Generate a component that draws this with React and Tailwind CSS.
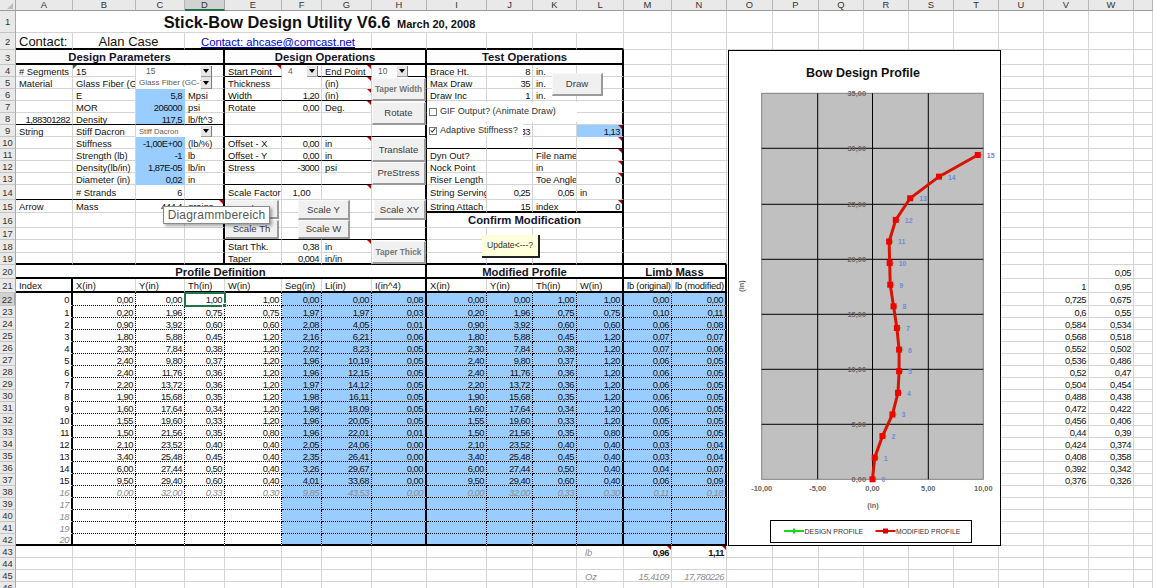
import React from 'react';

const COLS = ['A', 'B', 'C', 'D', 'E', 'F', 'G', 'H', 'I', 'J', 'K', 'L', 'M', 'N', 'O', 'P', 'Q', 'R', 'S', 'T', 'U', 'V', 'W', 'X'];
const LAST_ROW = 46;

// right aligned, centered and bold heading cells
const r = (t, extra = '') => ({ t, a: 'justify-end pr-[2px] tracking-[-0.5px]', extra });
const c = (t, extra = '', pt = 'pt-[2px]') => ({ t, a: 'justify-center', extra, pt });
const head = (t) => c(t, 'font-bold text-[11.3px] text-[#14142a]', 'pt-[3px]');
const dim = 'italic text-[#8c8c8c]';

// top of the sheet, everything above the profile tables
const cells = {
    A1: c(<span>Stick-Bow Design Utility V6.6 <span className="text-[11px] ml-[2px]">March 20, 2008</span></span>, 'font-bold text-[16.4px] text-[#111]', 'pt-[1px]'),
    A2: { t: 'Contact:', extra: 'text-[13px]', pt: 'pt-[2px]' },
    B2: c('Alan Case', 'text-[13px]', 'pt-[2px]'),
    D2: c(<a href="#contact" className="underline">Contact: ahcase@comcast.net</a>, 'text-[11.3px] text-[#0000c8]', 'pt-[5px]'),
    A3: head('Design Parameters'),
    E3: head('Design Operations'),
    I3: head('Test Operations'),
    A4: '# Segments', B4: '15', E4: 'Start Point', G4: 'End Point', I4: 'Brace Ht.', J4: r('8'), K4: 'in.',
    A5: 'Material', B5: 'Glass Fiber (GC-70)', E5: 'Thickness', G5: '(in)', I5: 'Max Draw', J5: r('35'), K5: 'in.',
    B6: 'E', C6: r('5,8'), D6: 'Mpsi', E6: 'Width', F6: r('1,20'), G6: '(in)', I6: 'Draw Inc', J6: r('1'), K6: 'in.',
    B7: 'MOR', C7: r('206000'), D7: 'psi', E7: 'Rotate', F7: r('0,00'), G7: 'Deg.',
    A8: r('1,88301282'), B8: 'Density', C8: r('117,5'), D8: 'lb/ft^3',
    A9: 'String', B9: 'Stiff Dacron', J9: r('33'), L9: r('1,13'),
    B10: 'Stiffness', C10: r('-1,00E+00'), D10: '(lb/%)', E10: 'Offset - X', F10: r('0,00'), G10: 'in',
    B11: 'Strength (lb)', C11: r('-1'), D11: 'lb', E11: 'Offset - Y', F11: r('0,00'), G11: 'in', I11: 'Dyn Out?', K11: 'File name',
    B12: 'Density(lb/in)', C12: r('1,87E-05'), D12: 'lb/in', E12: 'Stress', F12: r('-3000'), G12: 'psi', I12: 'Nock Point', K12: 'in',
    B13: 'Diameter (in)', C13: r('0,02'), D13: 'in', I13: 'Riser Length', K13: 'Toe Angle', L13: r('0'),
    B14: '# Strands', C14: r('6'), E14: 'Scale Factor', F14: c('1,00'), I14: 'String Serving', J14: r('0,25'), K14: r('0,05'), L14: 'in',
    A15: 'Arrow', B15: 'Mass', C15: r('444,4'), D15: 'grains', I15: 'String Attach', J15: r('15'), K15: 'index', L15: r('0'),
    I16: c('Confirm Modification', 'font-bold text-[11.3px] text-[#14142a]'),
    E18: 'Start Thk.', F18: r('0,38'), G18: 'in',
    E19: 'Taper', F19: r('0,004'), G19: 'in/in',
    A20: head('Profile Definition'),
    I20: head('Modified Profile'),
    M20: head('Limb Mass'),
    A21: 'Index', B21: 'X(in)', C21: 'Y(in)', D21: 'Th(in)', E21: 'W(in)', F21: 'Seg(in)', G21: 'Li(in)', H21: 'I(in^4)',
    I21: 'X(in)', J21: 'Y(in)', K21: 'Th(in)', L21: 'W(in)',
    M21: { t: 'lb (original)', extra: 'tracking-[-0.2px]' }, N21: { t: 'lb (modified)', extra: 'tracking-[-0.2px]' },
    L43: { t: 'lb', extra: dim + ' pl-[8px]' }, M43: r('0,96', 'font-bold'), N43: r('1,11', 'font-bold'),
    L45: { t: 'Oz', extra: dim + ' pl-[8px]' }, M45: r('15,4109', dim), N45: r('17,780226', dim),
    W20: r('0,05'), V21: r('1'), W21: r('0,95'),
};

// merged cells: [columns taken, class]
const spans = {
    A1: [12, 'col-span-12'], B2: [2, 'col-span-2'], D2: [4, 'col-span-4'],
    A3: [4, 'col-span-4'], E3: [4, 'col-span-4'], I3: [4, 'col-span-4'], I16: [4, 'col-span-4'],
    A20: [8, 'col-span-8'], I20: [4, 'col-span-4'], M20: [2, 'col-span-2'],
};

// x, y, th, w, seg, li, i, limb original, limb modified
const profile = [
    ['0,00', '0,00', '1,00', '1,00', '0,00', '0,00', '0,08', '0,00', '0,00'],
    ['0,20', '1,96', '0,75', '0,75', '1,97', '1,97', '0,03', '0,10', '0,11'],
    ['0,90', '3,92', '0,60', '0,60', '2,08', '4,05', '0,01', '0,06', '0,08'],
    ['1,80', '5,88', '0,45', '1,20', '2,16', '6,21', '0,06', '0,07', '0,07'],
    ['2,30', '7,84', '0,38', '1,20', '2,02', '8,23', '0,05', '0,07', '0,06'],
    ['2,40', '9,80', '0,37', '1,20', '1,96', '10,19', '0,05', '0,06', '0,05'],
    ['2,40', '11,76', '0,36', '1,20', '1,96', '12,15', '0,05', '0,06', '0,05'],
    ['2,20', '13,72', '0,36', '1,20', '1,97', '14,12', '0,05', '0,06', '0,05'],
    ['1,90', '15,68', '0,35', '1,20', '1,98', '16,11', '0,05', '0,06', '0,05'],
    ['1,60', '17,64', '0,34', '1,20', '1,98', '18,09', '0,05', '0,06', '0,05'],
    ['1,55', '19,60', '0,33', '1,20', '1,96', '20,05', '0,05', '0,05', '0,05'],
    ['1,50', '21,56', '0,35', '0,80', '1,96', '22,01', '0,01', '0,05', '0,05'],
    ['2,10', '23,52', '0,40', '0,40', '2,05', '24,06', '0,00', '0,03', '0,04'],
    ['3,40', '25,48', '0,45', '0,40', '2,35', '26,41', '0,00', '0,03', '0,04'],
    ['6,00', '27,44', '0,50', '0,40', '3,26', '29,67', '0,00', '0,04', '0,07'],
    ['9,50', '29,40', '0,60', '0,40', '4,01', '33,68', '0,00', '0,06', '0,09'],
    ['0,00', '32,00', '0,33', '0,30', '9,85', '43,53', '0,00', '0,11', '0,18'],
];

profile.forEach((p, i) => {
    const row = 22 + i;
    const extra = i === 16 ? dim : '';
    const vals = [p[0], p[1], p[2], p[3], p[4], p[5], p[6], p[0], p[1], p[2], p[3], p[7], p[8]];
    cells[`A${row}`] = r(String(i), extra);
    vals.forEach((v, k) => {
        cells[`${COLS[k + 1]}${row}`] = r(v, extra);
    });
});
[17, 18, 19, 20].forEach((n) => {
    cells[`A${n + 22}`] = r(String(n), dim);
});

// stray helper columns to the right of the chart
[
    ['0,725', '0,675'], ['0,6', '0,55'], ['0,584', '0,534'], ['0,568', '0,518'], ['0,552', '0,502'], ['0,536', '0,486'],
    ['0,52', '0,47'], ['0,504', '0,454'], ['0,488', '0,438'], ['0,472', '0,422'], ['0,456', '0,406'], ['0,44', '0,39'],
    ['0,424', '0,374'], ['0,408', '0,358'], ['0,392', '0,342'], ['0,376', '0,326'],
].forEach(([v, w], i) => {
    cells[`V${22 + i}`] = r(v);
    cells[`W${22 + i}`] = r(w);
});

const redCorners = new Set(['E4', 'G4', 'G5', 'G6', 'G7', 'G10', 'G14', 'D15', 'G18', 'L9', 'L10', 'L11', 'L12', 'L13', 'L15', 'M43', 'N43']);

const inRange = (col, from, to) => COLS.indexOf(col) >= COLS.indexOf(from) && COLS.indexOf(col) <= COLS.indexOf(to);

const isBlue = (col, row) =>
    (col === 'C' && ((row >= 6 && row <= 8) || (row >= 10 && row <= 13))) ||
    (col === 'L' && row === 9) ||
    (row >= 22 && row <= 42 && inRange(col, 'F', 'N'));

const thickRight = (col, row) =>
    (col === 'D' && row >= 3 && row <= 19) ||
    (col === 'H' && row >= 3 && row <= 42) ||
    (col === 'L' && row >= 3 && row <= 42) ||
    (col === 'N' && row >= 20 && row <= 42) ||
    (col === 'A' && row >= 21 && row <= 42);

const thickBottom = (col, row) =>
    ((row === 2 || row === 3) && inRange(col, 'A', 'L')) ||
    ([19, 20, 21, 42].includes(row) && inRange(col, 'A', 'N')) ||
    (row === 15 && inRange(col, 'I', 'L'));

const thinBottom = (col, row) =>
    ((row === 4 || row === 6 || row === 9 || row === 11 || row === 13 || row === 17) && inRange(col, 'E', 'H')) ||
    ((row === 8 || row === 14) && inRange(col, 'A', 'D')) ||
    (row === 10 && inRange(col, 'I', 'L'));

const rightBorder = (col, row, blue) => {
    if (thickRight(col, row)) return 'border-r-2 border-r-black';
    if (row >= 22 && row <= 42 && inRange(col, 'B', 'M')) return 'border-r border-r-black [border-right-style:dotted]';
    if (blue) return 'border-r border-r-[#99ccff]';
    return 'border-r border-r-[#d4d4d4]';
};

const bottomBorder = (col, row, blue) => {
    if (thickBottom(col, row)) return 'border-b-2 border-b-black';
    if (thinBottom(col, row)) return 'border-b border-b-black';
    if (row >= 22 && row <= 41) {
        if (col === 'A') return 'border-b border-b-white';
        if (inRange(col, 'B', 'N')) return 'border-b border-b-black [border-bottom-style:dotted]';
    }
    if (blue) return 'border-b border-b-[#99ccff]';
    return 'border-b border-b-[#d4d4d4]';
};

const Corner = () => (
    <span className="absolute top-0 right-0 w-0 h-0 border-t-[4px] border-l-[4px] border-t-[#c00000] border-l-transparent" />
);

const Cell = ({ col, row }) => {
    const key = `${col}${row}`;
    const raw = cells[key];
    const cell = raw && typeof raw === 'object' && raw.t !== undefined ? raw : { t: raw };
    const [span, spanClass] = spans[key] || [1, ''];
    const end = COLS[COLS.indexOf(col) + span - 1];
    const blue = isBlue(col, row);
    return (
        <div
            className={`relative flex items-center overflow-x-clip whitespace-nowrap ${spanClass} ${blue ? 'bg-[#99ccff]' : 'bg-white'} ${rightBorder(end, row, blue)} ${bottomBorder(end, row, blue)} ${cell.a || 'pl-[3px]'} ${cell.pt || 'pt-[2px]'} ${cell.extra || ''}`}
        >
            {cell.t}
            {redCorners.has(key) && <Corner />}
            {key === 'B4' && (
                <span className="absolute top-0 left-0 w-0 h-0 border-t-[4px] border-r-[4px] border-t-[#217346] border-r-transparent" />
            )}
        </div>
    );
};

// every row of the sheet, skipping cells that sit inside a merge
const SheetRow = ({ row }) => {
    const out = [];
    for (let i = 0; i < COLS.length; i++) {
        const span = spans[`${COLS[i]}${row}`];
        out.push(<Cell key={COLS[i]} col={COLS[i]} row={row} />);
        if (span) i += span[0] - 1;
    }
    return (
        <>
            <div
                className={`flex items-center justify-center pt-[1px] border-r border-b border-r-[#a8a8a8] border-b-[#c4c4c4] text-[#333] ${row === 22 ? 'bg-[#d2d2d2] text-[#1c6b3c] border-r-2 border-r-[#217346]' : 'bg-[#e9e9e9]'}`}
            >
                {row}
            </div>
            {out}
        </>
    );
};

const Button = ({ label, className, small }) => (
    <button
        className={`absolute flex items-center justify-center bg-[#f0f0f0] border-t border-l border-r-2 border-b-2 border-t-[#f8f8f8] border-l-[#f8f8f8] border-r-[#9a9a9a] border-b-[#9a9a9a] whitespace-nowrap ${small ? 'text-[8.3px] font-bold text-[#777]' : 'text-[9.6px] text-[#3c3c3c]'} ${className}`}
    >
        {label}
    </button>
);

const Dropdown = ({ label, className, textClass }) => (
    <div className={`absolute flex items-center bg-white overflow-hidden ${className}`}>
        <span className={`flex-1 min-w-0 overflow-hidden whitespace-nowrap text-[#5c5c5c] ${textClass}`}>{label}</span>
        <span className="flex items-center justify-center w-[11px] h-full bg-[#e6e6e6] border-r border-b border-r-[#777] border-b-[#999]">
            <span className="w-0 h-0 border-x-[3px] border-t-[4px] border-x-transparent border-t-black" />
        </span>
    </div>
);

const Checkbox = ({ label, checked, className }) => (
    <div className={`absolute flex items-center gap-[3px] bg-white pl-[2px] whitespace-nowrap text-[9.1px] text-[#333] ${className}`}>
        <span className="flex items-center justify-center w-[8px] h-[8px] bg-white border border-[#777]">
            {checked && (
                <svg viewBox="0 0 8 8" className="w-[7px] h-[7px]">
                    <path d="M1 4l2 2 4-5" fill="none" stroke="#222" strokeWidth="1.4" />
                </svg>
            )}
        </span>
        {label}
    </div>
);

const xPx = (x) => 872.5 + x * 11.08;
const yPx = (y) => 479.3 - y * 11.03;
const curve = profile.slice(0, 16).map((p, i) => ({
    i,
    x: xPx(parseFloat(p[0].replace(',', '.'))),
    y: yPx(parseFloat(p[1].replace(',', '.'))),
}));
const curvePoints = curve.map((p) => `${p.x},${p.y}`).join(' ');
const axisText = 'font-bold fill-[#666] text-[7.4px]';

const BowChart = () => (
    <div className="absolute left-[728px] top-[50px] w-[273px] h-[496px] bg-white border border-black">
        <svg viewBox="729 51 271 494" className="block w-[271px] h-[494px]">
            <text x="863" y="76.5" textAnchor="middle" className="font-bold text-[12.5px] fill-[#111]">Bow Design Profile</text>
            <rect x="761.7" y="93.3" width="221.6" height="386" fill="#c0c0c0" stroke="#808080" />
            {[817.7, 872.5, 928.3].map((x) => (
                <line key={x} x1={x} x2={x} y1="93.3" y2="479.3" stroke="#000" />
            ))}
            {[148.3, 204.3, 259.3, 314.3, 369.3, 424.3].map((y) => (
                <line key={y} x1="761.7" x2="983.3" y1={y} y2={y} stroke="#000" />
            ))}
            {[['35,00', 93.3], ['30,00', 148.3], ['25,00', 204.3], ['20,00', 259.3], ['15,00', 314.3], ['10,00', 369.3], ['5,00', 424.3], ['0,00', 479.3]].map(([t, y]) => (
                <text key={t} x="866" y={y + 2.5} textAnchor="end" className={axisText}>{t}</text>
            ))}
            {[['-10,00', 761.7], ['-5,00', 817.7], ['0,00', 872.5], ['5,00', 928.3], ['10,00', 983.3]].map(([t, x]) => (
                <text key={t} x={x} y="491" textAnchor="middle" className={axisText}>{t}</text>
            ))}
            <text x="873" y="507.5" textAnchor="middle" className={axisText}>(in)</text>
            <text transform="translate(743.5 286) rotate(-90)" textAnchor="middle" className={axisText}>(in)</text>
            <polyline points={curvePoints} fill="none" stroke="#d81400" strokeWidth="3" />
            {curve.map((p) => (
                <React.Fragment key={p.i}>
                    <rect x={p.x + 2} y={p.y - 1} width="2" height="2" fill="#5fbf3a" />
                    <rect x={p.x - 3} y={p.y - 3} width="6" height="6" fill="#f00000" />
                    <text x={p.x + 9} y={p.y + 3} className="font-bold fill-[#6f8adb] text-[7px]">{p.i}</text>
                </React.Fragment>
            ))}
            <rect x="770.5" y="520.5" width="201" height="22" fill="#fff" stroke="#000" />
            <line x1="784" x2="804" y1="531" y2="531" stroke="#19d61e" strokeWidth="2" />
            <path d="M794 528.5v5M791.5 531h5" stroke="#19d61e" strokeWidth="2" />
            <text x="804.5" y="533.5" className="text-[7px] fill-[#333]">DESIGN PROFILE</text>
            <line x1="875.5" x2="895.5" y1="531" y2="531" stroke="#d81400" strokeWidth="2" />
            <rect x="883" y="528.5" width="5" height="5" fill="#e00000" />
            <text x="896" y="533.5" className="text-[6.8px] fill-[#333]">MODIFIED PROFILE</text>
        </svg>
    </div>
);

const App = () => {
    const rows = [];
    for (let row = 1; row <= LAST_ROW; row++) rows.push(row);

    return (
        <div className="relative w-[1153px] h-[588px] overflow-hidden bg-white font-['Liberation_Sans',Arial,sans-serif] text-[9.4px] text-[#111] leading-none">
            <div className="grid grid-cols-[16px_57px_63px_49px_40px_57px_40px_50px_55px_60px_46px_44px_47px_48px_55px_46px_46px_45px_45px_45px_45px_45px_45px_45px_19px] grid-rows-[11px_22px_17px_15px_repeat(10,12px)_15px_13px_15px_12px_13px_12px_14px_14px_13px_repeat(20,12px)_repeat(4,12px)]">
                <div className="relative bg-[#e9e9e9] border-r border-b border-r-[#a8a8a8] border-b-[#9a9a9a]">
                    <span className="absolute right-[2px] bottom-[1px] w-0 h-0 border-b-[6px] border-l-[6px] border-b-[#bdbdbd] border-l-transparent" />
                </div>
                {COLS.map((col) => (
                    <div
                        key={col}
                        className={`flex items-center justify-center border-r text-[#333] overflow-hidden ${col === 'D' ? 'bg-[#d2d2d2] text-[#1c6b3c] border-r-[#a8a8a8] border-b-2 border-b-[#217346]' : 'bg-[#e9e9e9] border-r-[#b4b4b4] border-b border-b-[#9a9a9a]'}`}
                    >
                        {col === 'X' ? '' : col}
                    </div>
                ))}
                {rows.map((row) => (
                    <SheetRow key={row} row={row} />
                ))}
            </div>

            {/* form controls that float over the cells */}
            <Dropdown label="15" className="left-[136px] top-[66px] w-[76px] h-[11px]" textClass="pl-[10px] text-[8.5px]" />
            <Dropdown label="Glass Fiber (GC-70)" className="left-[136px] top-[77px] w-[76px] h-[12px]" textClass="pl-[3px] text-[8px]" />
            <Dropdown label="Stiff Dacron" className="left-[136px] top-[126px] w-[76px] h-[11px]" textClass="pl-[3px] text-[7.6px]" />
            <Dropdown label="4" className="left-[282px] top-[66px] w-[36px] h-[11px]" textClass="pl-[6px] text-[8.5px]" />
            <Dropdown label="10" className="left-[372px] top-[66px] w-[36px] h-[11px]" textClass="pl-[6px] text-[8.5px]" />

            <Button label="Taper Width" small className="left-[372px] top-[78px] w-[54px] h-[23px]" />
            <Button label="Rotate" className="left-[372px] top-[102px] w-[54px] h-[23px]" />
            <Button label="Translate" className="left-[372px] top-[138px] w-[54px] h-[24px]" />
            <Button label="PreStress" className="left-[372px] top-[162px] w-[54px] h-[23px]" />
            <Button label="Scale X" className="left-[225px] top-[200px] w-[54px] h-[19px]" />
            <Button label="Scale Th" className="left-[225px] top-[220px] w-[54px] h-[19px]" />
            <Button label="Scale Y" className="left-[298px] top-[200px] w-[52px] h-[20px]" />
            <Button label="Scale W" className="left-[298px] top-[220px] w-[52px] h-[19px]" />
            <Button label="Scale XY" className="left-[374px] top-[200px] w-[52px] h-[20px]" />
            <Button label="Taper Thick" small className="left-[372px] top-[241px] w-[54px] h-[23px]" />
            <Button label="Draw" className="left-[552px] top-[73px] w-[51px] h-[23px]" />

            <button className="absolute left-[482px] top-[235px] w-[58px] h-[23px] bg-[#ffffdc] border-r-2 border-b-2 border-r-[#222] border-b-[#222] text-[8.6px] text-[#333]">
                Update&lt;---?
            </button>

            <Checkbox label="GIF Output? (Animate Draw)" className="left-[427px] top-[102px] w-[150px] h-[20px]" />
            <Checkbox label="Adaptive Stiffness?" checked className="left-[427px] top-[124px] w-[96px] h-[13px]" />

            <BowChart />

            {/* selected cell D22 */}
            <div className="absolute left-[184px] top-[292px] w-[42px] h-[15px] border-2 border-[#217346] pointer-events-none" />
            <div className="absolute left-[222px] top-[303px] w-[5px] h-[5px] bg-[#217346] border border-white pointer-events-none" />

            {/* chart hover tooltip */}
            <div className="absolute left-[163px] top-[206px] w-[107px] h-[18px] flex items-center justify-center bg-white border border-[#8a8a8a] shadow-[2px_2px_3px_rgba(0,0,0,0.35)] text-[12px] tracking-[0.2px] text-[#575757]">
                Diagrammbereich
            </div>
        </div>
    );
};

export default App;
